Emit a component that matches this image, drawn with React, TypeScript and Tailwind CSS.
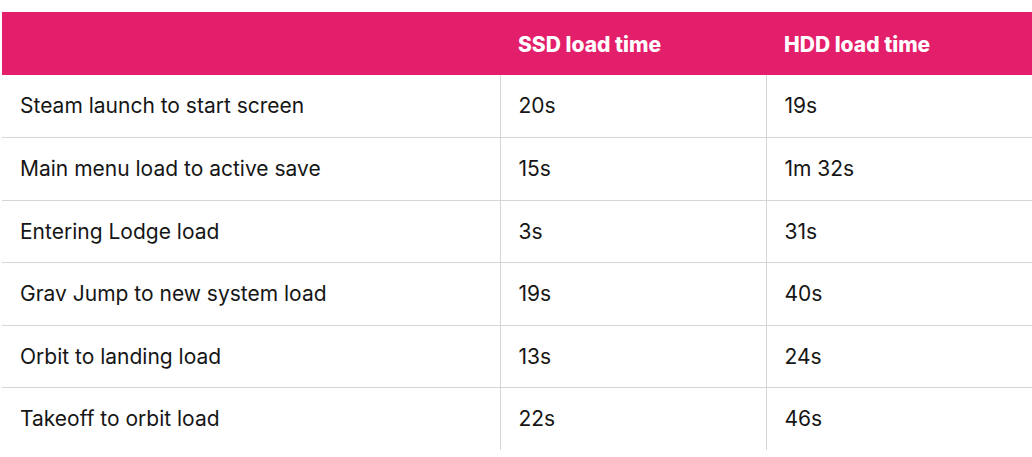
const rows: [string, string, string][] = [
  ['Steam launch to start screen', '20s', '19s'],
  ['Main menu load to active save', '15s', '1m 32s'],
  ['Entering Lodge load', '3s', '31s'],
  ['Grav Jump to new system load', '19s', '40s'],
  ['Orbit to landing load', '13s', '24s'],
  ['Takeoff to orbit load', '22s', '46s'],
];

export default function App() {
  return (
    <div className="min-h-screen bg-white pt-[12px] pl-[2px]" style={{ fontFamily: 'Inter, "Noto Sans", sans-serif' }}>
      <table className="w-[1030px] border-collapse table-fixed text-[21px] text-[#161616]">
        <colgroup>
          <col className="w-[498px]" />
          <col className="w-[266px]" />
          <col />
        </colgroup>
        <thead>
          <tr className="bg-[#e31e6b] h-[63px] text-white text-[21px]">
            <th className="px-[18px] pt-[2px] text-left font-extrabold"></th>
            <th className="px-[18px] pt-[2px] text-left font-extrabold">SSD load time</th>
            <th className="px-[18px] pt-[2px] text-left font-extrabold">HDD load time</th>
          </tr>
        </thead>
        <tbody>
          {rows.map((r, i) => (
            <tr key={i} className={`h-[62.5px] ${i < rows.length - 1 ? 'border-b border-[#d6d6d6]' : ''}`}>
              <td className="px-[18px]">{r[0]}</td>
              <td className="px-[18px] border-l border-[#d6d6d6]">{r[1]}</td>
              <td className="px-[18px] border-l border-[#d6d6d6]">{r[2]}</td>
            </tr>
          ))}
        </tbody>
      </table>
    </div>
  );
}
